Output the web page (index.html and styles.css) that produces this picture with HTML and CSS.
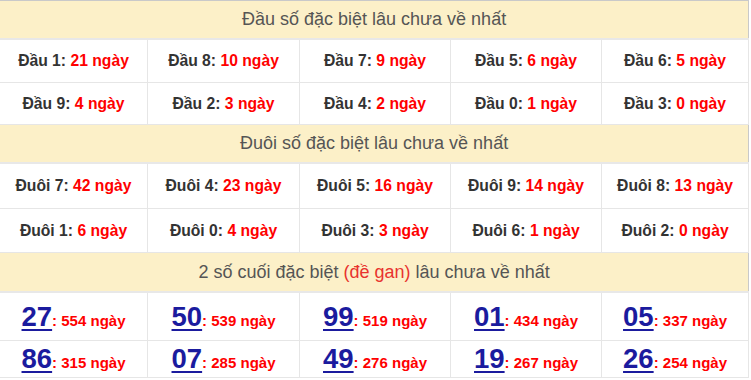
FILE: index.html
```html
<!DOCTYPE html>
<html lang="vi">
<head>
<meta charset="utf-8">
<link rel="stylesheet" href="styles.css">
</head>
<body>
<table class="gan">
  <colgroup>
    <col class="c1"><col class="c2"><col class="c3"><col class="c4"><col class="c5">
  </colgroup>
  <tbody>
    <tr class="head h1"><th colspan="5">Đầu số đặc biệt lâu chưa về nhất</th></tr>
    <tr class="row r1">
      <td>Đầu 1: <span class="red">21 ngày</span></td>
      <td>Đầu 8: <span class="red">10 ngày</span></td>
      <td>Đầu 7: <span class="red">9 ngày</span></td>
      <td>Đầu 5: <span class="red">6 ngày</span></td>
      <td>Đầu 6: <span class="red">5 ngày</span></td>
    </tr>
    <tr class="row r2">
      <td>Đầu 9: <span class="red">4 ngày</span></td>
      <td>Đầu 2: <span class="red">3 ngày</span></td>
      <td>Đầu 4: <span class="red">2 ngày</span></td>
      <td>Đầu 0: <span class="red">1 ngày</span></td>
      <td>Đầu 3: <span class="red">0 ngày</span></td>
    </tr>
    <tr class="head h2"><th colspan="5">Đuôi số đặc biệt lâu chưa về nhất</th></tr>
    <tr class="row r3">
      <td>Đuôi 7: <span class="red">42 ngày</span></td>
      <td>Đuôi 4: <span class="red">23 ngày</span></td>
      <td>Đuôi 5: <span class="red">16 ngày</span></td>
      <td>Đuôi 9: <span class="red">14 ngày</span></td>
      <td>Đuôi 8: <span class="red">13 ngày</span></td>
    </tr>
    <tr class="row r4">
      <td>Đuôi 1: <span class="red">6 ngày</span></td>
      <td>Đuôi 0: <span class="red">4 ngày</span></td>
      <td>Đuôi 3: <span class="red">3 ngày</span></td>
      <td>Đuôi 6: <span class="red">1 ngày</span></td>
      <td>Đuôi 2: <span class="red">0 ngày</span></td>
    </tr>
    <tr class="head h3"><th colspan="5">2 số cuối đặc biệt <span class="gan-red">(đề gan)</span> lâu chưa về nhất</th></tr>
    <tr class="num n1">
      <td><a class="big" href="#">27</a><span class="red">: 554 ngày</span></td>
      <td><a class="big" href="#">50</a><span class="red">: 539 ngày</span></td>
      <td><a class="big" href="#">99</a><span class="red">: 519 ngày</span></td>
      <td><a class="big" href="#">01</a><span class="red">: 434 ngày</span></td>
      <td><a class="big" href="#">05</a><span class="red">: 337 ngày</span></td>
    </tr>
    <tr class="num n2">
      <td><a class="big" href="#">86</a><span class="red">: 315 ngày</span></td>
      <td><a class="big" href="#">07</a><span class="red">: 285 ngày</span></td>
      <td><a class="big" href="#">49</a><span class="red">: 276 ngày</span></td>
      <td><a class="big" href="#">19</a><span class="red">: 267 ngày</span></td>
      <td><a class="big" href="#">26</a><span class="red">: 254 ngày</span></td>
    </tr>
  </tbody>
</table>
</body>
</html>
```

FILE: styles.css
```css
html, body {
  margin: 0;
  padding: 0;
  background: #ffffff;
}

body {
  font-family: "Liberation Sans", Arial, sans-serif;
  overflow: hidden;
}

.gan {
  border-collapse: collapse;
  table-layout: fixed;
  width: 749px;
  margin-left: -1px;
  border: 1px solid #c9c9c9;
}

.c1 { width: 148px; }
.c2 { width: 152px; }
.c3 { width: 151px; }
.c4 { width: 151px; }
.c5 { width: 147px; }

.head th {
  background: #fcf0c8;
  color: #555555;
  font-weight: normal;
  font-size: 18px;
  text-align: center;
  padding: 0;
  border-bottom: 2px solid #e8e8e8;
}

.h1 th { height: 37px; }
.h2 th { height: 37px; }
.h3 th { height: 38px; }

.gan td {
  border: 1px solid #e6e6e6;
  text-align: center;
  padding: 0;
  font-size: 15.7px;
  font-weight: bold;
  color: #333333;
  white-space: nowrap;
}

.r1 td { height: 42px; }
.r2 td { height: 41px; }
.r3 td { height: 44px; }
.r4 td { height: 43px; }
.n1 td { height: 47px; }
.n2 td { height: 36px; }

.num td .red {
  font-size: 15px;
}

.red {
  color: #ff0000;
}

.gan-red {
  color: #e8332e;
}

.big {
  color: #1b1b9e;
  font-size: 27.5px;
  font-weight: bold;
  text-decoration: underline;
  text-decoration-thickness: 2px;
  text-underline-offset: 3px;
}
```
